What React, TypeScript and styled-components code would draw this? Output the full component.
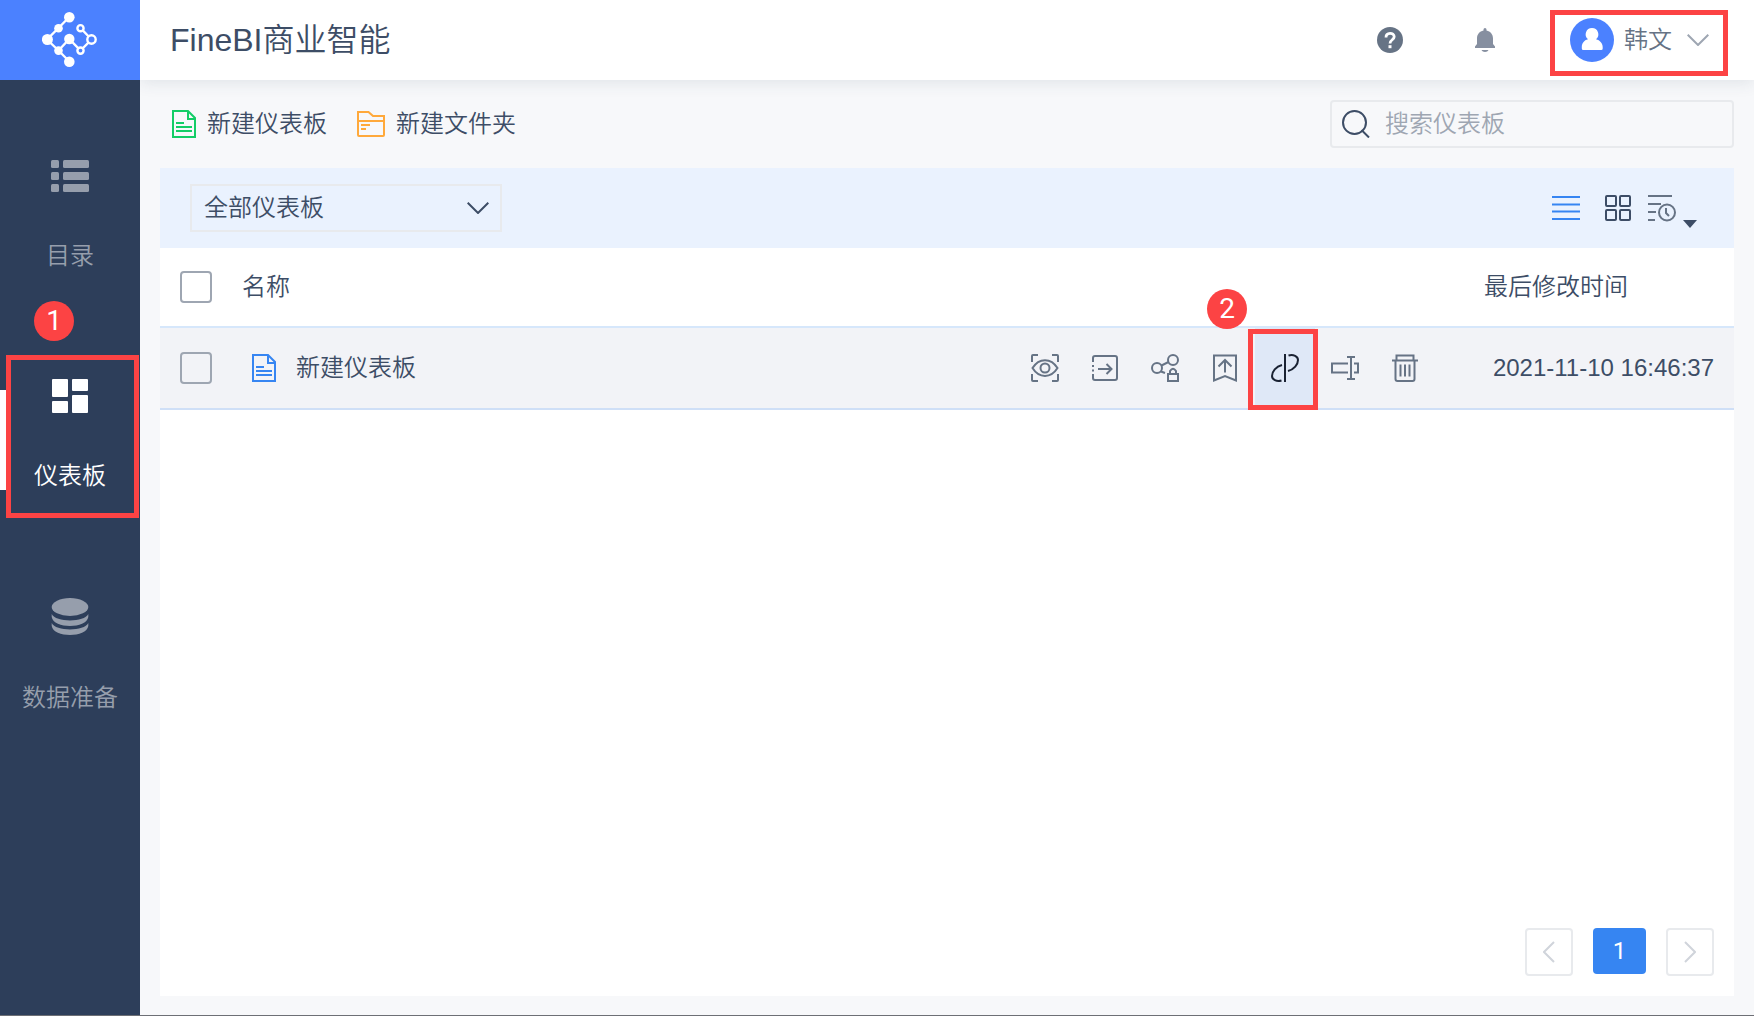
import React from 'react';
import styled, { createGlobalStyle, css } from 'styled-components';

const color = {
  ink: '#3d4d66',
  icon: '#667385',
  muted: '#9ea6b2',
  border: '#e8eaed',
  primary: '#3685f2',
  brand: '#4b81ff',
  nav: '#2d3e5a',
  mark: '#fc4344',
};

const GlobalStyle = createGlobalStyle`
  *, *::before, *::after { box-sizing: border-box; }
  body { margin: 0; }
  body, button, input, select {
    font-family: "Liberation Sans", "Noto Sans CJK SC", sans-serif;
    font-size: 24px;
    font-weight: 350;
    line-height: 32px;
    color: ${color.ink};
  }
  button { padding: 0; border: 0; background: none; cursor: pointer; }
  a { color: inherit; text-decoration: none; }
  svg { display: block; flex: none; }
`;

const Shell = styled.div`
  display: flex;
  min-height: 100vh;
  background: #f7f8fa;
  border-bottom: 1px solid #6d6f75;
`;

const Sidebar = styled.aside`
  position: relative;
  z-index: 1;
  flex: none;
  width: 140px;
  background: ${color.nav};
`;

const Logo = styled.a`
  display: grid;
  place-items: center;
  height: 80px;
  background: ${color.brand};
`;

const Nav = styled.nav`
  display: flex;
  flex-direction: column;
  padding-top: 30px;
`;

const NavItem = styled.a<{ $active?: boolean }>`
  position: relative;
  display: flex;
  flex-direction: column;
  align-items: center;
  gap: 46px;
  height: 220px;
  padding-top: 48px;
  color: ${(p) => (p.$active ? '#fff' : '#969eac')};
  ${(p) =>
    p.$active &&
    css`
      &::before {
        content: '';
        position: absolute;
        left: 0;
        top: 60px;
        width: 6px;
        height: 100px;
        background: #fff;
      }
    `}
`;

const Marker = styled.span<{ $inset: string }>`
  position: absolute;
  inset: ${(p) => p.$inset};
  border: 5px solid ${color.mark};
  pointer-events: none;
`;

const StepBadge = styled.span<{ $left: number; $top: number }>`
  position: absolute;
  left: ${(p) => p.$left}px;
  top: ${(p) => p.$top}px;
  z-index: 1;
  width: 40px;
  height: 40px;
  border-radius: 50%;
  background: ${color.mark};
  color: #fff;
  font-family: Roboto, sans-serif;
  font-size: 28px;
  font-weight: 400;
  line-height: 40px;
  text-align: center;
`;

const Page = styled.div`
  flex: 1;
  min-width: 0;
  display: flex;
  flex-direction: column;
`;

const Header = styled.header`
  display: flex;
  align-items: center;
  height: 80px;
  padding: 0 26px 0 30px;
  background: #fff;
  box-shadow: 0 2px 16px rgba(45, 62, 90, 0.12);
`;

const Title = styled.h1`
  margin: 0 auto 0 0;
  font-size: 32px;
  font-weight: 350;
  line-height: 40px;
`;

const HeaderButton = styled.button`
  display: grid;
  place-items: center;
  width: 40px;
  height: 40px;
  margin-right: 55px;
`;

const Account = styled.button`
  position: relative;
  display: flex;
  align-items: center;
  gap: 10px;
  height: 66px;
  margin-left: -10px;
  padding: 0 19px 0 20px;
  color: ${color.icon};
`;

const AccountName = styled.span`
  margin-right: 5px;
`;

const Main = styled.main`
  flex: 1;
  display: flex;
  flex-direction: column;
  padding: 0 20px 19px;
`;

const Toolbar = styled.div`
  display: flex;
  align-items: center;
  gap: 30px;
  height: 88px;
  padding-left: 12px;
`;

const ToolButton = styled.button`
  display: flex;
  align-items: center;
  gap: 11px;
`;

const Search = styled.label`
  display: flex;
  align-items: center;
  gap: 15px;
  width: 404px;
  height: 48px;
  margin-left: auto;
  padding: 0 10px;
  border: 2px solid ${color.border};
  border-radius: 4px;
`;

const SearchInput = styled.input`
  flex: 1;
  min-width: 0;
  padding: 0;
  border: 0;
  outline: 0;
  background: none;
  &::placeholder { color: ${color.muted}; opacity: 1; }
`;

const Panel = styled.section`
  flex: 1;
  display: flex;
  flex-direction: column;
  background: #fff;
`;

const FilterBar = styled.div`
  display: flex;
  align-items: center;
  height: 80px;
  padding: 0 37px 0 30px;
  background: #eaf2fe;
`;

const SelectBox = styled.div`
  display: grid;
  align-items: center;
  width: 312px;
  margin-right: auto;
  & > * { grid-area: 1 / 1; }
  & > svg { justify-self: end; margin-right: 13px; pointer-events: none; }
`;

const Select = styled.select`
  appearance: none;
  width: 100%;
  height: 48px;
  padding: 0 48px 0 12px;
  border: 2px solid ${color.border};
  border-radius: 0;
  background: none;
`;

const ViewButton = styled.button<{ $gap?: number }>`
  display: flex;
  align-items: center;
  gap: 7px;
  height: 40px;
  margin-left: ${(p) => p.$gap ?? 0}px;
  & > svg + svg { align-self: flex-end; }
`;

const Table = styled.table`
  width: 100%;
  table-layout: fixed;
  border-collapse: separate;
  border-spacing: 0;
`;

const Col = styled.col<{ $width?: number }>`
  width: ${(p) => (p.$width ? `${p.$width}px` : 'auto')};
`;

const HeadCell = styled.th`
  height: 80px;
  padding: 0;
  border-bottom: 2px solid #d6e7fb;
  font-weight: 350;
  text-align: left;
`;

const Cell = styled.td<{ $align?: 'right' }>`
  height: 82px;
  padding: 0 ${(p) => (p.$align ? 20 : 0)}px 0 0;
  border-bottom: 2px solid #cfdff7;
  background: #f2f3f7;
  text-align: ${(p) => p.$align ?? 'left'};
  white-space: nowrap;
`;

const Checkbox = styled.input`
  appearance: none;
  display: block;
  width: 32px;
  height: 32px;
  margin: 0 0 0 20px;
  border: 2px solid ${color.muted};
  border-radius: 4px;
  &:checked { background: ${color.primary}; border-color: ${color.primary}; }
`;

const FileLink = styled.a`
  display: flex;
  align-items: center;
  gap: 20px;
  padding-left: 10px;
`;

const Actions = styled.div`
  display: flex;
`;

const ActionButton = styled.button<{ $active?: boolean }>`
  position: relative;
  display: grid;
  place-items: center;
  width: 60px;
  height: 80px;
  color: ${(p) => (p.$active ? '#1a2233' : color.icon)};
  background: ${(p) => (p.$active ? '#dfe8f7' : 'none')};
`;

const Pager = styled.nav`
  display: flex;
  justify-content: flex-end;
  gap: 20px;
  margin-top: auto;
  padding: 20px;
`;

const PageArrow = styled.button`
  display: grid;
  place-items: center;
  width: 48px;
  height: 48px;
  border: 2px solid ${color.border};
  border-radius: 4px;
`;

const PageNumber = styled.button`
  width: 53px;
  height: 46px;
  border-radius: 4px;
  background: ${color.primary};
  color: #fff;
  font-family: Roboto, sans-serif;
  font-weight: 400;
`;

type IconProps = {
  w: number;
  h: number;
  stroke?: string;
  fill?: string;
  sw?: number;
  children: React.ReactNode;
};

const Icon = ({ w, h, stroke = 'currentColor', fill = 'none', sw = 2, children }: IconProps) => (
  <svg width={w} height={h} viewBox={`0 0 ${w} ${h}`} fill={fill} stroke={stroke} strokeWidth={sw} aria-hidden="true">
    {children}
  </svg>
);

const LogoIcon = () => (
  <Icon w={56} h={56} stroke="#fff" sw={2.4}>
    <path d="M27.3 5 16.5 16 5 27.5l11.5 11 10.8 11M16.5 38.5 27.3 27l11.2 11.5L49.5 27.5 38.5 16" />
    <g fill="#fff" stroke="none">
      <circle cx="27.3" cy="5.3" r="5.3" />
      <circle cx="16.5" cy="16.2" r="4.3" />
      <circle cx="5.4" cy="27.5" r="5.5" />
      <circle cx="27.3" cy="27" r="5.2" />
      <circle cx="16.5" cy="38.6" r="4.3" />
      <circle cx="27.3" cy="49.7" r="5.3" />
    </g>
    <g fill={color.brand}>
      <circle cx="38.5" cy="16.2" r="3.1" />
      <circle cx="49.5" cy="27.5" r="4.2" />
      <circle cx="38.5" cy="38.6" r="3.1" />
    </g>
  </Icon>
);

const CatalogIcon = () => (
  <Icon w={40} h={36} stroke="none" fill="currentColor">
    {[2, 14, 26].map((y) => (
      <g key={y}>
        <rect x="1" y={y} width="8" height="8" rx="1.5" />
        <rect x="13" y={y} width="26" height="8" rx="1.5" />
      </g>
    ))}
  </Icon>
);

const DashboardIcon = () => (
  <Icon w={38} h={36} stroke="none" fill="currentColor">
    <rect x="1" y="1" width="16" height="18" rx="1" />
    <rect x="21" y="1" width="16" height="12" rx="1" />
    <rect x="1" y="23" width="16" height="12" rx="1" />
    <rect x="21" y="17" width="16" height="18" rx="1" />
  </Icon>
);

const DatabaseIcon = () => (
  <Icon w={38} h={38} stroke="none" fill="currentColor">
    <ellipse cx="19" cy="9" rx="18.3" ry="9" />
    <path d="M.7 16C4.500 24.500 33.500 24.500 37.300 16V19C35.500 31 2.500 31 .7 19Z" />
    <path d="M.7 25C4.500 33.500 33.500 33.500 37.300 25V28C35.500 40 2.500 40 .7 28Z" />
  </Icon>
);

const HelpIcon = () => (
  <Icon w={26} h={26}>
    <circle cx="13" cy="13" r="13" fill={color.icon} stroke="none" />
    <path d="M9 10.400c0-5.400 8.200-5.200 8.200-.6 0 3-4.200 3-4.200 6.600" stroke="#fff" strokeWidth="2.800" />
    <path d="M11.500 18.200h3v3h-3z" fill="#fff" stroke="none" />
  </Icon>
);

const BellIcon = () => (
  <Icon w={20} h={24} stroke="none" fill="#868fa0">
    <path d="M8.500 2.600V1.500a1.500 1.500 0 0 1 3 0v1.100C15.500 3.500 18 6.500 18 10.500V16L20 18.500V20H0v-1.500L2 16v-5.500C2 6.500 4.500 3.500 8.500 2.600ZM6.500 22h7c-1 2.500-6 2.500-7 0Z" />
  </Icon>
);

const AvatarIcon = () => (
  <Icon w={44} h={44} stroke="none">
    <circle cx="22" cy="22" r="22" fill={color.brand} />
    <path d="M22 10a6.300 6.300 0 0 1 4 11.200c4 1 6.700 4 6.700 8V30.500q0 1.500-1.500 1.500H13.300q-1.500 0-1.500-1.500V29.200c0-4 2.200-7 6.200-8A6.300 6.300 0 0 1 22 10Z" fill="#fff" />
  </Icon>
);

const ChevronDown = ({ stroke }: { stroke: string }) => (
  <Icon w={22} h={12} stroke={stroke}>
    <path d="m.7.700 10.300 10.300L21.300.700" />
  </Icon>
);

const FileIcon = ({ stroke }: { stroke: string }) => (
  <Icon w={24} h={28} stroke={stroke}>
    <path d="M1 1h15l7 7v19H1ZM16 1v8h7M4 13h8M4 17h16M4 21h16" />
  </Icon>
);

const FolderIcon = () => (
  <Icon w={28} h={26} stroke="#ffa93b">
    <path d="M1 24V1h10.500l4.500 4h11v19q0 1-1 1H2q-1 0-1-1ZM1 10h26M4 14h9M4 18h5" />
  </Icon>
);

const SearchIcon = () => (
  <Icon w={28} h={28} stroke={color.ink}>
    <circle cx="12.500" cy="12.500" r="11.500" />
    <path d="m19.500 20 7.500 7.500" />
  </Icon>
);

const ListViewIcon = () => (
  <Icon w={28} h={26} stroke={color.primary}>
    <path d="M0 2h28M0 9.500h28M0 16.500h28M0 24h28" />
  </Icon>
);

const GridViewIcon = () => (
  <Icon w={26} h={26} stroke={color.ink}>
    {[1, 15].map((x) => [1, 15].map((y) => <rect key={`${x}-${y}`} x={x} y={y} width="10" height="10" rx="1" />))}
  </Icon>
);

const SortIcon = () => (
  <Icon w={28} h={28} stroke={color.icon}>
    <path d="M0 2h24M0 10h13M0 18h8M0 26h7M18 14v5l3 3" />
    <circle cx="19" cy="18.500" r="8" />
  </Icon>
);

const CaretIcon = () => (
  <Icon w={14} h={8} stroke="none" fill={color.ink}>
    <path d="M0 0h14L7 8Z" />
  </Icon>
);

const PreviewIcon = () => (
  <Icon w={28} h={28}>
    <path d="M1 8V2q0-1 1-1h5M21 1h5q1 0 1 1v6M27 20v6q0 1-1 1h-5M7 27H2q-1 0-1-1v-6" />
    <path d="M1.500 14C8 3.500 20 3.500 26.500 14 20 24.500 8 24.500 1.500 14Z" />
    <circle cx="14" cy="14" r="4.500" />
  </Icon>
);

const MoveIcon = () => (
  <Icon w={26} h={26}>
    <path d="M1 7V3q0-2 2-2h20q2 0 2 2v20q0 2-2 2H3q-2 0-2-2v-4M1 10v2M1 14.500v2M6 14h13.500M14.500 9l5 5-5 5" />
  </Icon>
);

const ShareIcon = () => (
  <Icon w={28} h={28}>
    <circle cx="6" cy="14" r="5" />
    <circle cx="22" cy="6" r="5" />
    <path d="M10.500 11.500 17.500 8M10 17.500l4 1.500M17 20h10v7H17ZM19 20v-3q3-4.500 6 0v3" />
  </Icon>
);

const PublishIcon = () => (
  <Icon w={24} h={28}>
    <path d="M1 1.500h22V26.500L12 22 1 26.500ZM12 18.500V6.500M5.500 12.500 12 6l6.500 6.500" />
  </Icon>
);

const LinkIcon = () => (
  <Icon w={28} h={28}>
    <path d="M14 0v28M11 11C5 12.500 1 17.500 1 22c0 3.500 4.500 6 9.500 4.500M17 17c6-1.500 10-6.500 10-11 0-3.500-4.500-6-9.500-4.500" />
  </Icon>
);

const RenameIcon = () => (
  <Icon w={28} h={24}>
    <path d="M17 7.500H1v9h16M20 1v22M16 1h8M16 23h8M23 7.500h4v9h-4" />
  </Icon>
);

const DeleteIcon = () => (
  <Icon w={26} h={28}>
    <path d="M0 6.500h26M4.500 6V1.500h17V6M3.500 7v18q0 2 2 2h15q2 0 2-2V7M8.500 10.500v12M13 10.500v12M17.500 10.500v12" />
  </Icon>
);

const PageChevron = ({ next }: { next?: boolean }) => (
  <Icon w={12} h={22} stroke="#d0d4db">
    <path d={next ? 'M1 1l10 10L1 21' : 'M11 1 1 11l10 10'} />
  </Icon>
);

const navItems = [
  { label: '目录', icon: <CatalogIcon /> },
  { label: '仪表板', icon: <DashboardIcon />, active: true },
  { label: '数据准备', icon: <DatabaseIcon /> },
];

const actions = [
  { label: '预览', icon: <PreviewIcon /> },
  { label: '移动', icon: <MoveIcon /> },
  { label: '分享', icon: <ShareIcon /> },
  { label: '申请挂出', icon: <PublishIcon /> },
  { label: '创建公共链接', icon: <LinkIcon />, active: true },
  { label: '重命名', icon: <RenameIcon /> },
  { label: '删除', icon: <DeleteIcon /> },
];

const rows = [{ name: '新建仪表板', modified: '2021-11-10 16:46:37' }];

export default function App() {
  return (
    <>
      <GlobalStyle />
      <Shell>
        <Sidebar>
          <Logo href="#" aria-label="FineBI">
            <LogoIcon />
          </Logo>
          <Nav>
            {navItems.map((item) => (
              <NavItem key={item.label} href="#" $active={item.active}>
                {item.icon}
                <span>{item.label}</span>
                {item.active && (
                  <>
                    <StepBadge $left={34} $top={-29}>1</StepBadge>
                    <Marker $inset="25px 1px 32px 6px" />
                  </>
                )}
              </NavItem>
            ))}
          </Nav>
        </Sidebar>
        <Page>
          <Header>
            <Title>FineBI商业智能</Title>
            <HeaderButton type="button" aria-label="帮助">
              <HelpIcon />
            </HeaderButton>
            <HeaderButton type="button" aria-label="消息">
              <BellIcon />
            </HeaderButton>
            <Account type="button">
              <AvatarIcon />
              <AccountName>韩文</AccountName>
              <ChevronDown stroke="#9ea6b2" />
              <Marker $inset="3px 0 -3px 0" />
            </Account>
          </Header>
          <Main>
            <Toolbar>
              <ToolButton type="button">
                <FileIcon stroke="#13cd66" />
                新建仪表板
              </ToolButton>
              <ToolButton type="button">
                <FolderIcon />
                新建文件夹
              </ToolButton>
              <Search>
                <SearchIcon />
                <SearchInput type="text" placeholder="搜索仪表板" aria-label="搜索仪表板" />
              </Search>
            </Toolbar>
            <Panel>
              <FilterBar>
                <SelectBox>
                  <Select aria-label="仪表板范围">
                    <option>全部仪表板</option>
                  </Select>
                  <ChevronDown stroke={color.ink} />
                </SelectBox>
                <ViewButton type="button" aria-label="列表视图">
                  <ListViewIcon />
                </ViewButton>
                <ViewButton type="button" aria-label="网格视图" $gap={25}>
                  <GridViewIcon />
                </ViewButton>
                <ViewButton type="button" aria-label="排序" $gap={17}>
                  <SortIcon />
                  <CaretIcon />
                </ViewButton>
              </FilterBar>
              <Table>
                <colgroup>
                  <Col $width={82} />
                  <Col />
                  <Col $width={469} />
                  <Col $width={250} />
                </colgroup>
                <thead>
                  <tr>
                    <HeadCell>
                      <Checkbox type="checkbox" aria-label="全选" />
                    </HeadCell>
                    <HeadCell colSpan={2}>名称</HeadCell>
                    <HeadCell>最后修改时间</HeadCell>
                  </tr>
                </thead>
                <tbody>
                  {rows.map((row) => (
                    <tr key={row.name}>
                      <Cell>
                        <Checkbox type="checkbox" aria-label={row.name} />
                      </Cell>
                      <Cell>
                        <FileLink href="#">
                          <FileIcon stroke={color.primary} />
                          {row.name}
                        </FileLink>
                      </Cell>
                      <Cell>
                        <Actions>
                          {actions.map((action) => (
                            <ActionButton key={action.label} type="button" aria-label={action.label} $active={action.active}>
                              {action.icon}
                              {action.active && (
                                <>
                                  <StepBadge $left={-48} $top={-39}>2</StepBadge>
                                  <Marker $inset="1px -3px -2px -7px" />
                                </>
                              )}
                            </ActionButton>
                          ))}
                        </Actions>
                      </Cell>
                      <Cell $align="right">{row.modified}</Cell>
                    </tr>
                  ))}
                </tbody>
              </Table>
              <Pager aria-label="分页">
                <PageArrow type="button" aria-label="上一页">
                  <PageChevron />
                </PageArrow>
                <PageNumber type="button">1</PageNumber>
                <PageArrow type="button" aria-label="下一页">
                  <PageChevron next />
                </PageArrow>
              </Pager>
            </Panel>
          </Main>
        </Page>
      </Shell>
    </>
  );
}
